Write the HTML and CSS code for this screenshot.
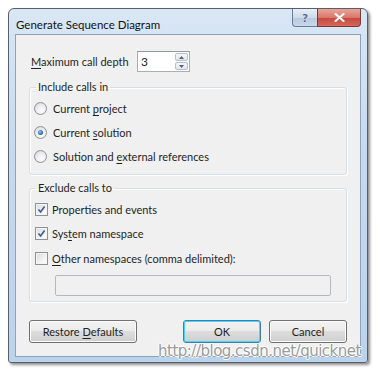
FILE: index.html
```html
<!DOCTYPE html>
<html lang="en">
<head>
  <meta charset="UTF-8" />
  <title>Generate Sequence Diagram</title>
  <link rel="stylesheet" href="styles.css">
</head>
<body>

<div class="window">
  <div class="titlebar">
    <span class="title">Generate Sequence Diagram</span>
    <div class="caption-btns">
      <span class="btn-help">?</span>
      <span class="btn-close">
        <svg width="11" height="9" viewBox="0 0 11 9"><path d="M1.5 1 L9.5 8 M9.5 1 L1.5 8" stroke="#fff" stroke-width="2.2" stroke-linecap="round"/></svg>
      </span>
    </div>
  </div>

  <div class="client">
    <div class="depth-row">
      <span class="depth-label"><u>M</u>aximum call depth</span>
      <div class="spin">
        <span class="spin-val">3</span>
        <div class="spin-arrows">
          <span class="arrow"><svg width="5" height="3" viewBox="0 0 5 3"><path d="M0 3 L2.5 0 L5 3 Z" fill="#4d6185"/></svg></span>
          <span class="arrow"><svg width="5" height="3" viewBox="0 0 5 3"><path d="M0 0 L2.5 3 L5 0 Z" fill="#4d6185"/></svg></span>
        </div>
      </div>
    </div>

    <fieldset class="group group-include">
      <legend>Include calls in</legend>
      <div class="opt"><span class="radio"></span><span>Current <u>p</u>roject</span></div>
      <div class="opt"><span class="radio checked"></span><span>Current <u>s</u>olution</span></div>
      <div class="opt"><span class="radio"></span><span>Solution and <u>e</u>xternal references</span></div>
    </fieldset>

    <fieldset class="group group-exclude">
      <legend>Exclude calls to</legend>
      <div class="opt"><span class="check"><svg width="9" height="9" viewBox="0 0 9 9"><path d="M1.5 4.5 L3.6 7 L7.6 1.5" fill="none" stroke="#3d5a8f" stroke-width="1.6"/></svg></span><span>Propert<u>i</u>es and events</span></div>
      <div class="opt"><span class="check"><svg width="9" height="9" viewBox="0 0 9 9"><path d="M1.5 4.5 L3.6 7 L7.6 1.5" fill="none" stroke="#3d5a8f" stroke-width="1.6"/></svg></span><span>Sys<u>t</u>em namespace</span></div>
      <div class="opt"><span class="check"></span><span><u>O</u>ther namespaces (comma delimited):</span></div>
      <div class="textbox"></div>
    </fieldset>

    <div class="buttons">
      <span class="btn btn-restore"><span>Restore <u>D</u>efaults</span></span>
      <div class="spacer"></div>
      <span class="btn btn-default">OK</span>
      <span class="btn">Cancel</span>
    </div>
  </div>
</div>

<div class="watermark">http://blog.csdn.net/quicknet</div>

</body>
</html>
```

FILE: styles.css
```css
body {
  margin: 0;
  padding: 8px;
  background: #ffffff;
  font-family: Lato, 'Open Sans', sans-serif;
  font-size: 11px;
  color: #1e1e1e;
}

u {
  text-decoration: underline;
  text-underline-offset: 2px;
}

.window {
  box-sizing: border-box;
  width: 360px;
  height: 355px;
  border: 1px solid #56606c;
  border-radius: 6px 6px 3px 3px;
  background: linear-gradient(180deg, #d9e7f5 0%, #c6daee 40%, #bcd3ec 100%);
  padding: 0 6px 5px 6px;
  box-shadow: 2px 2px 3px rgba(0,0,0,0.45);
  display: flex;
  flex-direction: column;
}

.titlebar {
  height: 25px;
  display: flex;
  align-items: flex-start;
}

.title {
  margin-top: 9px;
  margin-left: 1px;
  font-size: 11.5px;
  color: #111;
}

.caption-btns {
  margin-left: auto;
  display: flex;
}

.btn-help, .btn-close {
  height: 17px;
  display: flex;
  align-items: center;
  justify-content: center;
  border: 1px solid #6b7d92;
  border-top: none;
}

.btn-help {
  width: 24px;
  border-radius: 0 0 0 4px;
  border-right: none;
  background: linear-gradient(180deg, #e6eef7 0%, #cfdbe9 50%, #b9cadf 51%, #c9d8ea 100%);
  color: #4d6185;
  font-weight: bold;
  font-size: 12px;
}

.btn-close {
  width: 42px;
  border-radius: 0 0 4px 0;
  border-color: #7a3a36;
  background: linear-gradient(180deg, #e8a597 0%, #d8786b 50%, #c7463a 51%, #d3685d 100%);
}

.client {
  flex: 1;
  background: #f0f0f0;
  border: 1px solid #8ea3ba;
  padding: 0 13px;
  display: flex;
  flex-direction: column;
}

.depth-row {
  display: flex;
  align-items: center;
  margin-top: 16px;
  padding-left: 2px;
}

.depth-label {
  width: 106px;
  white-space: nowrap;
}

.spin {
  box-sizing: border-box;
  width: 53px;
  height: 21px;
  background: #fff;
  border: 1px solid #abadb3;
  border-top-color: #8e9aa8;
  display: flex;
  align-items: center;
}

.spin-val {
  flex: 1;
  padding-left: 3px;
  font-size: 12px;
}

.spin-arrows {
  width: 13px;
  height: 17px;
  margin-right: 1px;
  display: flex;
  flex-direction: column;
  gap: 1px;
}

.arrow {
  flex: 1;
  display: flex;
  align-items: center;
  justify-content: center;
  border: 1px solid #b8bec6;
  border-radius: 2px;
  background: linear-gradient(180deg, #f6f6f6, #e2e5ea);
}

.group {
  margin: 0;
  border: 1px solid #d5dfe5;
  border-radius: 3px;
  box-shadow: inset 1px 1px 0 #fff, 1px 1px 0 #fff;
  padding: 0 0 0 4px;
  min-width: 0;
}

.group legend {
  padding: 0 2px;
  margin-left: 2px;
  line-height: 16px;
}

.group-include {
  margin-top: 7px;
  height: 96px;
  box-sizing: border-box;
  padding-top: 1px;
}

.group-exclude {
  margin-top: 5px;
  height: 122px;
  box-sizing: border-box;
  padding-top: 1px;
}

.opt {
  height: 24px;
  display: flex;
  align-items: center;
  white-space: nowrap;
}

.radio {
  box-sizing: border-box;
  width: 13px;
  height: 13px;
  border-radius: 50%;
  border: 1px solid #8e9196;
  background: radial-gradient(circle at 60% 65%, #ffffff 0%, #f0f0f0 40%, #d3d3d3 100%);
  margin-right: 6px;
  display: flex;
  align-items: center;
  justify-content: center;
}

.radio.checked::after {
  content: "";
  width: 5px;
  height: 5px;
  border-radius: 50%;
  background: radial-gradient(circle at 40% 40%, #8fc7f0 0%, #1f5fa7 70%, #183e73 100%);
}

.check {
  box-sizing: border-box;
  width: 13px;
  height: 13px;
  border: 1px solid #8e9196;
  background: linear-gradient(135deg, #d9d9d9 0%, #f2f2f2 60%, #ffffff 100%);
  box-shadow: inset 0 0 0 1px #f4f4f4;
  margin-left: 1px;
  margin-right: 4px;
  display: flex;
  align-items: center;
  justify-content: center;
}

.group-exclude .opt {
  height: 24.5px;
}

.textbox {
  box-sizing: border-box;
  width: 276px;
  height: 21px;
  margin: 4px 0 0 21px;
  background: #f0f0f0;
  border: 1px solid #b5b9be;
  border-radius: 2px;
}

.buttons {
  margin-top: 18px;
  display: flex;
  gap: 8px;
}

.spacer {
  flex: 1;
}

.btn {
  box-sizing: border-box;
  height: 23px;
  width: 78px;
  display: flex;
  align-items: center;
  justify-content: center;
  border: 1px solid #707070;
  border-radius: 3px;
  background: linear-gradient(180deg, #f3f3f3 0%, #ebebeb 48%, #dddddd 50%, #cfcfcf 100%);
  box-shadow: inset 0 0 0 1px #fcfcfc;
  color: #1e1e1e;
  white-space: nowrap;
}

.btn-restore {
  width: 108px;
}

.btn-default {
  border-color: #3c7fb1;
  box-shadow: inset 0 0 0 1px #48d3fb;
}

.watermark {
  position: absolute;
  left: 158px;
  top: 342px;
  font-family: 'DejaVu Sans', sans-serif;
  font-size: 15px;
  color: #9a9a9a;
  letter-spacing: -0.5px;
  text-shadow: 1px 0 0 #fff, -1px 0 0 #fff, 0 1px 0 #fff, 0 -1px 0 #fff;
}
```
